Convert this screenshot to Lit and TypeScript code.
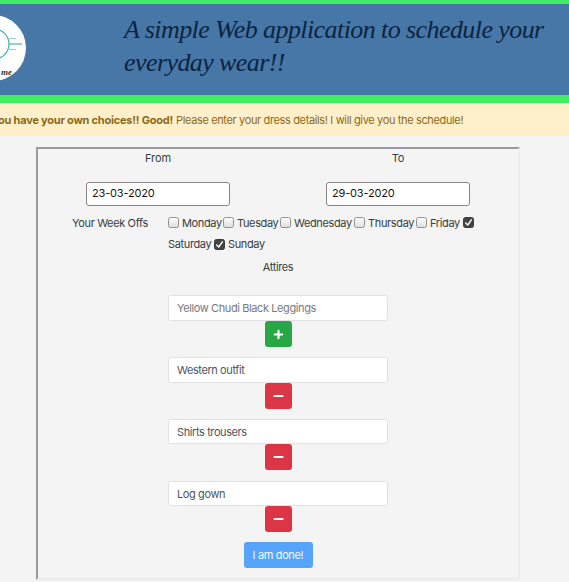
import { LitElement, html, css, svg } from "lit";
import { customElement, property } from "lit/decorators.js";

@customElement("day-box")
class DayBox extends LitElement {
  @property({ type: Boolean }) checked = false;
  static styles = css`
    :host { display: block; width: 11px; height: 11px; flex: none; }
    .box { box-sizing: border-box; width: 11px; height: 11px; border: 1px solid #929292; border-radius: 2.5px; background: linear-gradient(#fff, #dedede); }
    .on { background: #444; border-color: #3b3b3b; }
    svg { display: block; width: 9px; height: 9px; }
  `;
  render() {
    return html`<div class="box ${this.checked ? "on" : ""}">
      ${this.checked ? html`<svg viewBox="0 0 9 9">${svg`<path d="M1.7 5 L3.7 7 L7.4 1.8" fill="none" stroke="#fff" stroke-width="1.4" stroke-linecap="round" stroke-linejoin="round"/>`}</svg>` : ""}
    </div>`;
  }
}

@customElement("attire-row")
class AttireRow extends LitElement {
  @property() value = "";
  @property() kind = "remove";
  static styles = css`
    :host { display: flex; flex-direction: column; align-items: center; width: 220px; height: 61.8px; }
    .field { box-sizing: border-box; width: 220px; height: 25.5px; line-height: 25px; padding: 0 8px; border: 1px solid #dfe1e4; border-radius: 2.5px; background: #fff; color: #50565c; letter-spacing: -0.4px; }
    .add { color: #757b81; }
    .btn { width: 27px; height: 26px; border-radius: 3px; background: #dc3545; }
    .plus { background: #28a745; }
    svg { display: block; width: 27px; height: 26px; }
  `;
  render() {
    const add = this.kind === "add";
    return html`<div class="field ${add ? "add" : ""}">${this.value}</div>
      <div class="btn ${add ? "plus" : ""}"><svg viewBox="0 0 27 26">
        <path d=${add ? "M9.8 13.5H17.2M13.5 9.8V17.2" : "M9.5 13H17.5"} fill="none" stroke="#fff" stroke-width="2.1" stroke-linecap="round"/>
      </svg></div>`;
  }
}

@customElement("app-root")
class AppRoot extends LitElement {
  static styles = css`
    :host { display: block; height: 582px; overflow: hidden; background: #f4f4f4; color: #3a3d40; font: 11px/22px Inter, sans-serif; letter-spacing: -0.36px; }
    header { box-sizing: border-box; height: 103px; display: flex; border-top: 4px solid #41ed62; border-bottom: 8px solid #41ed62; background: #4677a7; overflow: hidden; }
    .logo { width: 66px; height: 66px; margin: 11px 0 0 -40px; flex: none; }
    .logo text { font: italic bold 9px "Liberation Serif", serif; letter-spacing: 0; }
    h1 { margin: 9px 0 0 98px; font: italic 400 26px/33px "Liberation Serif", serif; letter-spacing: -0.58px; color: #0b2440; white-space: nowrap; }
    .alert { box-sizing: border-box; height: 33px; padding-top: 6px; display: flex; gap: 3px; background: #fff0cb; color: #8b6a16; white-space: nowrap; overflow: hidden; }
    .alert b { width: 181px; margin-left: -8px; flex: none; display: flex; justify-content: flex-end; letter-spacing: -0.22px; }
    .form { box-sizing: border-box; width: 484px; height: 433px; margin: 11px 0 0 36px; border: 2px solid; border-color: #9b9b9b #ececec #ececec #9b9b9b; }
    .dates { display: grid; grid-template-columns: 1fr 1fr; height: 63px; }
    .col { display: flex; flex-direction: column; align-items: center; line-height: 18px; letter-spacing: -0.1px; }
    .date { box-sizing: border-box; width: 144px; height: 24px; margin-top: 15px; padding: 0 5px; border: 1px solid #858585; border-radius: 3px; background: #fff; color: #171717; line-height: 21px; letter-spacing: -0.18px; }
    .offs { display: flex; height: 44px; }
    .offs .name { width: 96px; padding-left: 34px; }
    .row { display: flex; align-items: center; height: 21.5px; white-space: nowrap; }
    .item { display: flex; align-items: center; gap: 3px; }
    .title { text-align: center; height: 39.3px; }
    .rows { display: flex; flex-direction: column; align-items: center; }
    .done { width: 69px; height: 26px; line-height: 26px; margin: 0 auto; text-align: center; border-radius: 3px; background: #56a3fc; color: #f4f9ff; }
    .w55 { width: 55px; } .w57 { width: 57px; } .w74 { width: 74px; } .w62 { width: 62px; } .w47 { width: 47px; } .sat { width: 46px; }
  `;
  render() {
    const days = [["Monday", "w55"], ["Tuesday", "w57"], ["Wednesday", "w74"], ["Thursday", "w62"], ["Friday", "w47"]];
    const attires = ["Yellow Chudi Black Leggings", "Western outfit", "Shirts trousers", "Log gown"];
    return html`
      <header>
        <svg class="logo" viewBox="0 0 66 66">
          <circle cx="33" cy="33" r="33" fill="#fff"/>
          <circle cx="34" cy="29" r="15" fill="none" stroke="#4bb4aa" stroke-width="1.3"/>
          <path d="M48 23.5H56M48 34.5H56" stroke="#9bd3cc" stroke-width="1"/>
          <path d="M49 29H62" stroke="#5bb9af" stroke-width="1.3"/>
          <text x="52" y="59.5" text-anchor="end" fill="#333">me</text>
        </svg>
        <h1>A simple Web application to schedule your<br>everyday wear!!</h1>
      </header>
      <div class="alert"><b>You have your own choices!! Good!</b><span>Please enter your dress details! I will give you the schedule!</span></div>
      <div class="form">
        <div class="dates">
          <div class="col">From<div class="date">23-03-2020</div></div>
          <div class="col">To<div class="date">29-03-2020</div></div>
        </div>
        <div class="offs">
          <div class="name">Your Week Offs</div>
          <div>
            <div class="row">${days.map(([d, w]) => html`<div class="item ${w}"><day-box></day-box><span>${d}</span></div>`)}<day-box checked></day-box></div>
            <div class="row"><span class="sat">Saturday</span><div class="item"><day-box checked></day-box><span>Sunday</span></div></div>
          </div>
        </div>
        <div class="title">Attires</div>
        <div class="rows">${attires.map((a, i) => html`<attire-row .value=${a} .kind=${i ? "remove" : "add"}></attire-row>`)}</div>
        <div class="done">I am done!</div>
      </div>`;
  }
}
